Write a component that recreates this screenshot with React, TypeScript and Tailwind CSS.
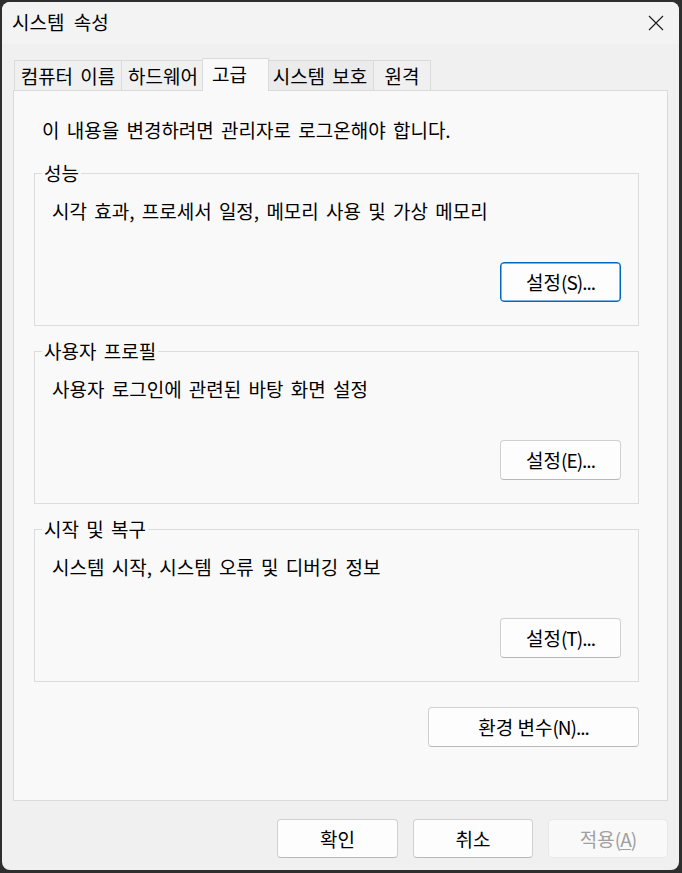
import React from "react";

function Lat({ children }: { children: React.ReactNode }) {
  return <span className="tracking-[-1px]">{children}</span>;
}

function Group({ label, desc, btn, key2, primary }: { label: string; desc: string; btn: string; key2: string; primary?: boolean }) {
  return (
    <div className="relative ml-[20px] mr-[28px] h-[153px] border border-[#dcdcdc] pt-[25px] pl-[17px] pr-[17px]">
      <span className="absolute left-[7px] top-[-13px] bg-[#f9f9f9] px-[2px] leading-[24px]">{label}</span>
      <div className="leading-[24px]">{desc}</div>
      <div className="mt-[39px] flex justify-end">
        <button
          className={
            primary
              ? "w-[121px] h-[40px] rounded-[4px] border border-[#0067c0] bg-[#fdfdfd] leading-[24px] shadow-[inset_0_0_0_0.5px_#0067c0]"
              : "w-[121px] h-[40px] rounded-[4px] border border-[#d0d0d0] border-b-[#b8b8b8] bg-[#fdfdfd] leading-[24px]"
          }
        >
          {btn}
          <Lat>{key2}</Lat>
        </button>
      </div>
    </div>
  );
}

export default function App() {
  const tabs = [
    { t: "컴퓨터 이름", w: "w-[107px]" },
    { t: "하드웨어", w: "w-[83px]" },
  ];
  return (
    <div className="w-[682px] h-[873px] bg-[#2e2e2e] pt-[2px] pl-[2px] font-['Noto_Sans_CJK_KR','Noto_Sans',sans-serif] text-[19px] leading-[24px] [word-spacing:3px] text-black">
      <div className="w-[677px] h-[868px] rounded-[8px] overflow-hidden bg-[#f0f0f0] flex flex-col">
        {/* title bar */}
        <div className="h-[42px] shrink-0 bg-[#f3f3f3] flex items-center justify-between pl-[10px] pr-[14px] pb-[2px]">
          <span className="[word-spacing:5px]">시스템 속성</span>
          <svg width="16" height="16" viewBox="0 0 16 16" className="mr-[1px] mt-[2px]">
            <path d="M1 1 L15 15 M15 1 L1 15" stroke="#1a1a1a" strokeWidth="1.1" fill="none" />
          </svg>
        </div>
        {/* body */}
        <div className="flex-1 px-[11px] pt-[14px]">
          {/* tabs */}
          <div className="flex items-end h-[32px] pl-[1px]">
            {tabs.map((x) => (
              <div
                key={x.t}
                className={`${x.w} h-[30px] flex items-center justify-center border-t border-l border-[#dadada] bg-[#f0f0f0]`}
              >
                {x.t}
              </div>
            ))}
            <div className="relative z-10 w-[67px] -mx-[2px] h-[33px] -mb-[1px] flex items-center pl-[9px] pb-[2px] border-t border-l border-r border-[#dadada] bg-[#f9f9f9]">
              고급
            </div>
            <div className="w-[106px] h-[30px] flex items-center justify-center border-t border-[#dadada] bg-[#ebebeb]">
              시스템 보호
            </div>
            <div className="w-[58px] h-[30px] flex items-center justify-center border-t border-l border-r border-[#dadada] bg-[#f0f0f0]">
              원격
            </div>
          </div>
          {/* panel */}
          <div className="h-[711px] border border-[#dadada] bg-[#f9f9f9] pt-[27px]">
            <div className="pl-[28px]">이 내용을 변경하려면 관리자로 로그온해야 합니다.</div>
            <div className="mt-[31px] flex flex-col gap-[25px]">
              <Group primary label="성능" desc="시각 효과, 프로세서 일정, 메모리 사용 및 가상 메모리" btn="설정" key2="(S)..." />
              <Group label="사용자 프로필" desc="사용자 로그인에 관련된 바탕 화면 설정" btn="설정" key2="(E)..." />
              <Group label="시작 및 복구" desc="시스템 시작, 시스템 오류 및 디버깅 정보" btn="설정" key2="(T)..." />
            </div>
            <div className="mt-[25px] flex justify-end pr-[28px]">
              <button className="w-[211px] h-[40px] rounded-[4px] border border-[#d0d0d0] border-b-[#b8b8b8] bg-[#fdfdfd] leading-[24px]">
                환경 변수<Lat>(N)...</Lat>
              </button>
            </div>
          </div>
          {/* bottom buttons */}
          <div className="mt-[18px] flex justify-end gap-[15px]">
            <button className="w-[121px] h-[39px] rounded-[4px] border border-[#d0d0d0] border-b-[#b8b8b8] bg-[#fdfdfd] leading-[24px]">
              확인
            </button>
            <button className="w-[120px] h-[39px] rounded-[4px] border border-[#d0d0d0] border-b-[#b8b8b8] bg-[#fdfdfd] leading-[24px]">
              취소
            </button>
            <button className="w-[120px] h-[39px] rounded-[4px] border border-[#e8e8e8] bg-[#f9f9f9] text-[#a0a0a0] leading-[24px]">
              적용<Lat>(<span className="underline underline-offset-2">A</span>)</Lat>
            </button>
          </div>
        </div>
      </div>
    </div>
  );
}
